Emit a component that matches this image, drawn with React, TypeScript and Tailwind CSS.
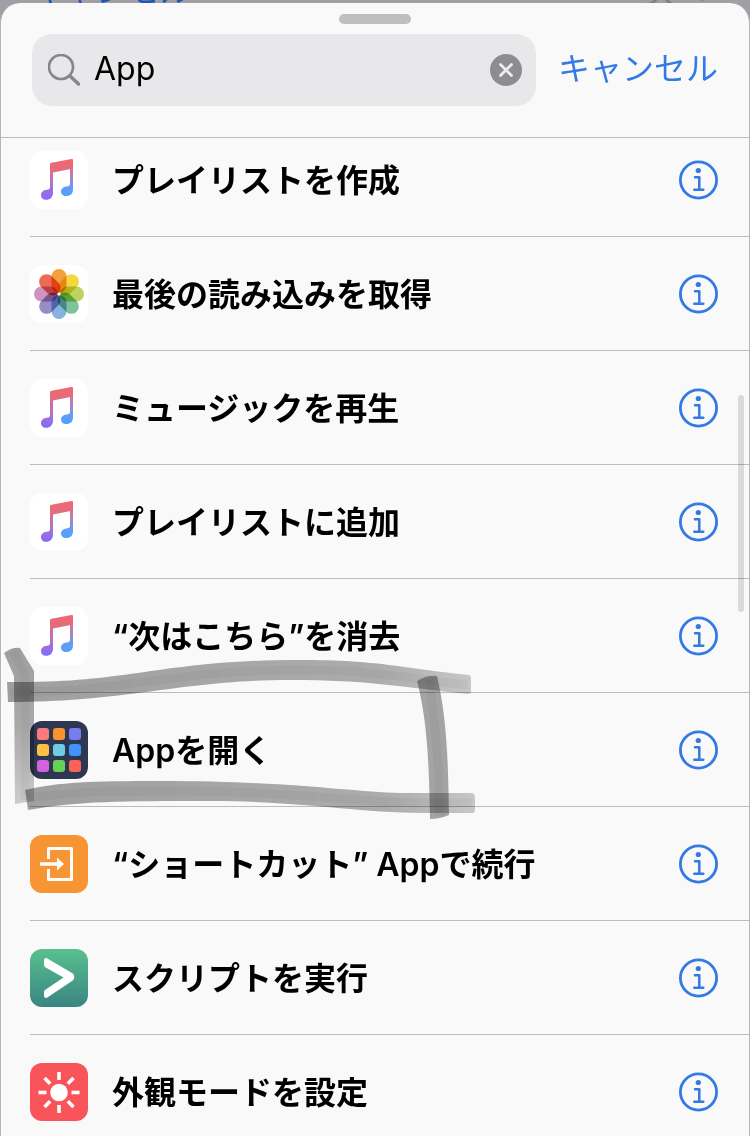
import { useState, type ReactNode } from "react"

function MusicIcon() {
  return (
    <svg viewBox="0 0 58 58" className="size-full" aria-hidden>
      <defs>
        <linearGradient id="noteBlue" x1="0" y1="0" x2="0" y2="1">
          <stop offset="0" stopColor="#f0666e" />
          <stop offset="0.35" stopColor="#d0779f" />
          <stop offset="0.7" stopColor="#6b9af5" />
          <stop offset="1" stopColor="#4ba3fb" />
        </linearGradient>
        <linearGradient id="notePurple" x1="0" y1="0" x2="0" y2="1">
          <stop offset="0" stopColor="#f0666e" />
          <stop offset="0.5" stopColor="#b973c4" />
          <stop offset="1" stopColor="#7f6bff" />
        </linearGradient>
        <linearGradient id="noteBeam" x1="0" y1="0" x2="0" y2="1">
          <stop offset="0" stopColor="#f5656b" />
          <stop offset="1" stopColor="#dc6f85" />
        </linearGradient>
      </defs>
      <rect width="58" height="58" rx="12" fill="#fff" />
      <path
        d="M43 9v29c0 5-3 7-6.500 7-3.500 0-5.500-2-5.500-4.500 0-3 2.500-4.500 5.500-5 2-.4 3.500-.7 3.500-2.500V17Z"
        fill="url(#noteBlue)"
      />
      <path
        d="M20 13v23c0 1.800-.8 2.300-3.500 2.800-3 .5-5.500 2.200-5.500 5.200 0 2.800 2 4.800 5 4.800 4.300 0 7-2.800 7-7.300V20.500Z"
        fill="url(#notePurple)"
      />
      <path d="M20 13.500c0-1 .5-1.500 1.500-1.700L41.500 8c1-.2 1.500.2 1.500 1.200V17.500L23 21.500l-3 1Z" fill="url(#noteBeam)" />
    </svg>
  )
}

const PETALS = [
  { angle: 0, color: "#f3a03c" },
  { angle: 45, color: "#f3d83f" },
  { angle: 90, color: "#bcd35f" },
  { angle: 135, color: "#7fc39b" },
  { angle: 180, color: "#86b3e0" },
  { angle: 225, color: "#978dc4" },
  { angle: 270, color: "#cb95c0" },
  { angle: 315, color: "#ee6a55" },
]

function PhotosIcon() {
  return (
    <svg viewBox="0 0 58 58" className="size-full" aria-hidden>
      <rect width="58" height="58" rx="12" fill="#fff" />
      {PETALS.map((p) => (
        <rect
          key={p.angle}
          x="21.500"
          y="4"
          width="15"
          height="24"
          rx="7.500"
          fill={p.color}
          transform={`rotate(${p.angle} 29 29)`}
          className="mix-blend-multiply"
        />
      ))}
      <circle cx="29" cy="29" r="1.500" fill="#fff" />
    </svg>
  )
}

const TILES = [
  "#fa7b7f", "#f9932c", "#7b7cec",
  "#fdc244", "#6fcde3", "#3f93fa",
  "#d263dc", "#67d156", "#fb6157",
]

function AppsIcon() {
  return (
    <svg viewBox="0 0 58 58" className="size-full" aria-hidden>
      <rect width="58" height="58" rx="12" fill="#2e3752" />
      {TILES.map((color, i) => (
        <rect
          key={color}
          x={7 + (i % 3) * 16}
          y={7 + Math.floor(i / 3) * 16}
          width="12"
          height="12"
          rx="3"
          fill={color}
        />
      ))}
    </svg>
  )
}

function ContinueIcon() {
  return (
    <svg viewBox="0 0 58 58" className="size-full" aria-hidden>
      <rect width="58" height="58" rx="12" fill="#f79433" />
      <path d="M18.500 24V13.500h23v31h-23V34" fill="none" stroke="#fff" strokeWidth="3" strokeLinejoin="round" />
      <path d="M10 27.200h17V22.500l7 6.500-7 6.500v-4.700H10Z" fill="#fff" />
    </svg>
  )
}

function ScriptIcon() {
  return (
    <svg viewBox="0 0 58 58" className="size-full" aria-hidden>
      <defs>
        <linearGradient id="script" x1="0" y1="0" x2="0" y2="1">
          <stop offset="0" stopColor="#58c08e" />
          <stop offset="1" stopColor="#3a8583" />
        </linearGradient>
      </defs>
      <rect width="58" height="58" rx="12" fill="url(#script)" />
      <path
        d="M14 11.500c0-2 1.500-3 3.300-2L42 24c3 1.800 3 6.200 0 8L17.300 48.500c-1.800 1-3.300 0-3.300-2V43c0-1 .5-1.700 1.300-2.200L33.500 28.500 15.300 18.200c-.8-.5-1.300-1.200-1.300-2.200Z"
        fill="#fff"
      />
    </svg>
  )
}

const RAYS = [0, 45, 90, 135, 180, 225, 270, 315]

function AppearanceIcon() {
  return (
    <svg viewBox="0 0 58 58" className="size-full" aria-hidden>
      <rect width="58" height="58" rx="12" fill="#fa545b" />
      <circle cx="29" cy="29.500" r="8.800" fill="#fff" />
      {RAYS.map((angle) => (
        <rect key={angle} x="27.200" y="9" width="3.600" height="8" fill="#fff" transform={`rotate(${angle} 29 29.500)`} />
      ))}
    </svg>
  )
}

function InfoIcon() {
  return (
    <svg viewBox="0 0 40 40" className="size-10" fill="none" stroke="#337ae4" aria-hidden>
      <circle cx="20.500" cy="20" r="18.100" strokeWidth="2.800" />
      <circle cx="20.300" cy="10.500" r="2.600" fill="#337ae4" stroke="none" />
      <path d="M17 17.300h4.300v12.500M16.300 29.800h9" strokeWidth="2.500" strokeLinecap="round" strokeLinejoin="round" />
    </svg>
  )
}

/* Felt-pen frame drawn round one row; overlapping strokes get darker. */
function MarkerFrame() {
  return (
    <svg
      viewBox="0 640 500 190"
      className="pointer-events-none absolute -top-[53px] -left-px z-10 w-[500px] mix-blend-multiply"
      aria-hidden
    >
      <defs>
        <linearGradient id="fadeDown" x1="0" y1="0" x2="0" y2="1">
          <stop offset="0" stopOpacity="0.36" />
          <stop offset="0.5" stopOpacity="0.32" />
          <stop offset="1" stopOpacity="0.18" />
        </linearGradient>
        <linearGradient id="fadeRight" x1="0" y1="0" x2="1" y2="0">
          <stop offset="0" stopOpacity="0.36" />
          <stop offset="0.8" stopOpacity="0.31" />
          <stop offset="1" stopOpacity="0.2" />
        </linearGradient>
      </defs>
      <path d="M4 653Q12 647 20 648L34 671V801L15 804L14 676Z" fill="url(#fadeDown)" />
      <path
        d="M7 682C130 684 160 660 300 660C380 660 400 668 469 675Q471 676 471 678V691Q471 694 468 694C400 687 370 680 290 680C180 680 130 702 8 702Z"
        fill="url(#fadeRight)"
      />
      <path
        d="M25 790C60 782 90 781 160 781C290 781 350 792 400 793H472Q475 794 475 797V810Q475 813 472 813H425C350 812 300 801 210 801C120 801 80 801 28 810Z"
        fill="url(#fadeRight)"
      />
      <path d="M417 681Q427 675 437 676C446 715 448 750 449 815Q440 819 430 819C429 760 427 720 417 681Z" fillOpacity="0.34" />
      <g fill="none" stroke="#000" strokeOpacity="0.04" strokeWidth="9">
        <path d="M10 692C130 692 170 670 300 670C380 670 400 678 468 685" />
        <path d="M28 798C80 791 110 791 180 791C290 791 350 802 420 803H472" />
        <path d="M429 680C437 730 439 770 440 816" />
        <path d="M13 651L25 675V800" />
      </g>
    </svg>
  )
}

type Action = { label: string; icon: ReactNode; marked?: boolean }

const ACTIONS: Action[] = [
  { label: "プレイリストを作成", icon: <MusicIcon /> },
  { label: "最後の読み込みを取得", icon: <PhotosIcon /> },
  { label: "ミュージックを再生", icon: <MusicIcon /> },
  { label: "プレイリストに追加", icon: <MusicIcon /> },
  { label: "“次はこちら”を消去", icon: <MusicIcon /> },
  { label: "Appを開く", icon: <AppsIcon />, marked: true },
  { label: "“ショートカット” Appで続行", icon: <ContinueIcon /> },
  { label: "スクリプトを実行", icon: <ScriptIcon /> },
  { label: "外観モードを設定", icon: <AppearanceIcon /> },
]

function ActionRow({ label, icon, marked }: Action) {
  return (
    <li className="relative pl-[29px]">
      <div className="flex h-[114px] items-center border-b border-[#bcbcbe] pr-[31px]">
        <button type="button" className="flex flex-1 items-center gap-6 text-left">
          <span className="size-[58px] shrink-0">{icon}</span>
          <span className="pt-0.5 text-[32px] leading-10 font-semibold whitespace-nowrap text-black">{label}</span>
        </button>
        <button type="button" aria-label={`${label} info`} className="shrink-0">
          <InfoIcon />
        </button>
      </div>
      {marked && <MarkerFrame />}
    </li>
  )
}

export default function App() {
  const [query, setQuery] = useState("App")

  return (
    <div className="flex h-screen flex-col overflow-hidden bg-[#a09fa5] font-[Inter,'Noto_Sans_CJK_JP',sans-serif]">
      {/* Sliver of the screen that lies under the sheet */}
      <div className="flex h-[3px] shrink-0 items-end justify-between overflow-hidden pr-11 pl-8 text-[32px] leading-6">
        <span className="text-[#1f58b8]">キャンセル</span>
        <span className="text-[#7d7c81]">次へ</span>
      </div>

      <main className="relative flex min-h-0 flex-1 flex-col overflow-hidden rounded-t-[20px] border-x border-[#b5b5b9] bg-[#f9f9f9]">
        <div className="mx-auto mt-[11px] h-[10px] w-[72px] shrink-0 rounded-full bg-[#bfbfc1]" />

        <header className="flex shrink-0 items-center border-b border-[#bcbcbe] px-[31px] pt-[10px] pb-[31px]">
          <div className="flex h-[72px] min-w-0 flex-1 items-center rounded-[20px] bg-[#e8e8ea] pr-[14px] pl-4">
            <svg viewBox="0 0 32 32" className="size-8 shrink-0" fill="none" stroke="#868689" strokeLinecap="round" aria-hidden>
              <circle cx="13" cy="13" r="12" strokeWidth="2.600" />
              <path d="M22 22l8.500 8" strokeWidth="3.400" />
            </svg>
            <input
              type="text"
              aria-label="検索"
              value={query}
              onChange={(e) => setQuery(e.target.value)}
              className="ml-[14px] min-w-0 flex-1 bg-transparent pb-0.5 text-[32px] leading-10 text-black outline-none"
            />
            <button type="button" aria-label="消去" onClick={() => setQuery("")} className="shrink-0">
              <svg viewBox="0 0 32 32" className="size-8" aria-hidden>
                <circle cx="16" cy="16" r="16" fill="#8c8c91" />
                <path d="M10.500 10.500l11 11m0-11l-11 11" stroke="#ededef" strokeWidth="2.800" strokeLinecap="round" />
              </svg>
            </button>
          </div>
          <button type="button" className="ml-[22px] shrink-0 pb-0.5 text-[32px] leading-10 text-[#337ae4]">
            キャンセル
          </button>
        </header>

        <div className="min-h-0 flex-1 overflow-hidden">
          {/* The list is scrolled a little way under the header */}
          <ul className="-mt-[15px]">
            {ACTIONS.map((action) => (
              <ActionRow key={action.label} {...action} />
            ))}
          </ul>
        </div>

        <div className="absolute top-[392px] right-[5px] h-[217px] w-[6px] rounded-full bg-black/12" />
      </main>
    </div>
  )
}
